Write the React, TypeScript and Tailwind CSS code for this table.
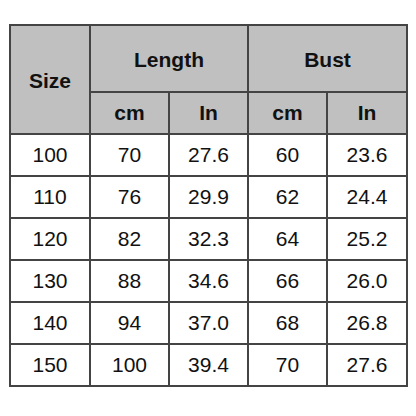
const rows = [
  ["100", "70", "27.6", "60", "23.6"],
  ["110", "76", "29.9", "62", "24.4"],
  ["120", "82", "32.3", "64", "25.2"],
  ["130", "88", "34.6", "66", "26.0"],
  ["140", "94", "37.0", "68", "26.8"],
  ["150", "100", "39.4", "70", "27.6"],
]

const App = () => {
  return (
    <div className="w-[416px] h-[416px] bg-white pt-[24px] pl-[9px] font-['Liberation_Sans',Arial,sans-serif] text-[21px] text-[#111]">
      <table className="border-collapse table-fixed w-[397px] text-center">
        <colgroup>
          <col className="w-[80px]" />
          <col className="w-[79px]" />
          <col className="w-[79px]" />
          <col className="w-[79px]" />
          <col className="w-[80px]" />
        </colgroup>
        <thead className="bg-[#c0c0c0] font-bold">
          <tr className="h-[67px]">
            <th rowSpan={2} className="border-2 border-[#444] p-0 pt-[2px]">Size</th>
            <th colSpan={2} className="border-2 border-[#444] p-0 pt-[2px]">Length</th>
            <th colSpan={2} className="border-2 border-[#444] p-0 pt-[2px]">Bust</th>
          </tr>
          <tr className="h-[42px]">
            <th className="border-2 border-[#444] p-0">cm</th>
            <th className="border-2 border-[#444] p-0">In</th>
            <th className="border-2 border-[#444] p-0">cm</th>
            <th className="border-2 border-[#444] p-0">In</th>
          </tr>
        </thead>
        <tbody>
          {rows.map((r) => (
            <tr key={r[0]} className="h-[42px]">
              {r.map((c, i) => (
                <td key={i} className="border-2 border-[#444] p-0">
                  {c}
                </td>
              ))}
            </tr>
          ))}
        </tbody>
      </table>
    </div>
  )
}

export default App
